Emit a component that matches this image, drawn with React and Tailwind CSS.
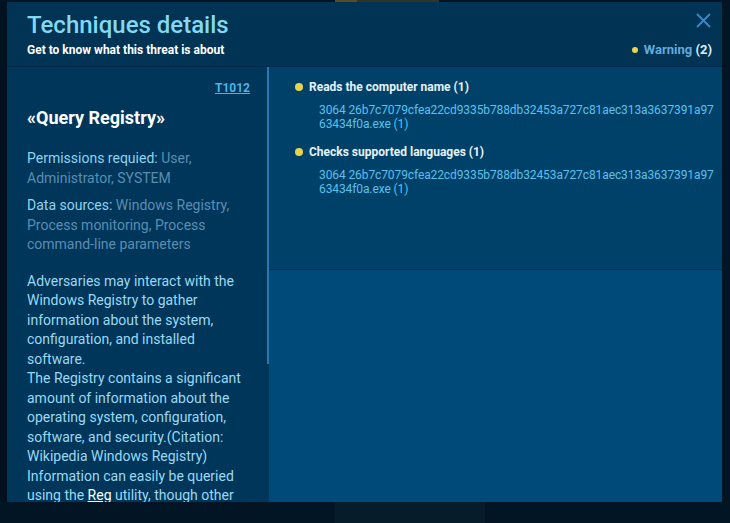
const hash = '3064 26b7c7079cfea22cd9335b788db32453a727c81aec313a3637391a97'

const behaviors = [
  { title: 'Reads the computer name (1)', file: '63434f0a.exe (1)' },
  { title: 'Checks supported languages (1)', file: '63434f0a.exe (1)' },
]

function CloseIcon() {
  return (
    <svg width="15" height="15" viewBox="0 0 15 15" fill="none">
      <path d="M1 1L14 14M14 1L1 14" stroke="#3a8cc6" strokeWidth="1.8" />
    </svg>
  )
}

export default function App() {
  return (
    <div className="flex h-[523px] w-[730px] flex-col overflow-hidden bg-[#011525] font-['Roboto',sans-serif]">
      <div className="flex h-[2px] shrink-0">
        <div className="w-[335px]" />
        <div className="w-[22px] bg-[#5a4a2a]" />
        <div className="w-[82px] bg-[#2f3628]" />
      </div>

      <div className="flex h-[500px] shrink-0">
        <div className="w-[7px] bg-[#02111f]" />
        <div className="flex w-[715px] flex-col bg-[#003354]">
          <header className="flex h-[65px] shrink-0 justify-between border-b border-[#002a47] pl-5 pr-[10px]">
            <div className="pt-[9px]">
              <h2 className="text-[24px] font-medium leading-[28px] text-[#83d9f2]">Techniques details</h2>
              <p className="mt-[3px] text-[12px] font-bold leading-[16px] text-white">
                Get to know what this threat is about
              </p>
            </div>
            <div className="flex flex-col items-end">
              <button type="button" className="mr-px mt-[11px]">
                <CloseIcon />
              </button>
              <div className="mt-[14px] flex items-center gap-[6px] text-[13px] font-bold leading-[16px]">
                <span className="h-[6px] w-[6px] rounded-full bg-[#e8d44a]" />
                <span className="text-[#63abdc]">
                  Warning <span className="text-[#dcedf8]">(2)</span>
                </span>
              </div>
            </div>
          </header>

          <div className="flex min-h-0 flex-1">
            <aside className="flex w-[262px] shrink-0 overflow-hidden bg-[#00365a]">
              <div className="w-[260px] pl-5 pt-[8px]">
                <div className="pr-[17px] text-right">
                  <a href="#" className="text-[12px] font-bold leading-[16px] text-[#4cb3ea] underline">
                    T1012
                  </a>
                </div>
                <div className="pr-[19px]">
                  <h3 className="mt-[7px] text-[18px] font-bold leading-[24px] text-white">«Query Registry»</h3>
                  <p className="mt-[19px] text-[14px] leading-[19.5px] text-[#5a8db2]">
                    <span className="text-[#8fd3f0]">Permissions requied:</span> User, Administrator, SYSTEM
                  </p>
                  <p className="mt-2 text-[14px] leading-[19.5px] text-[#5a8db2]">
                    <span className="text-[#8fd3f0]">Data sources:</span> Windows Registry, Process monitoring,
                    Process command-line parameters
                  </p>
                  <p className="mt-[17px] text-[14px] leading-[19.5px] text-[#9cd8f2]">
                    Adversaries may interact with the Windows Registry to gather information about the system,
                    configuration, and installed software.
                    <br />
                    The Registry contains a significant amount of information about the operating system,
                    configuration, software, and security.(Citation: Wikipedia Windows Registry) Information can
                    easily be queried using the <span className="text-white underline">Reg</span> utility, though
                    other Windows utilities may also be used to gather information.
                  </p>
                </div>
              </div>
              <div className="w-[2px] shrink-0">
                <div className="h-[297px] bg-[#2a78b2]" />
              </div>
            </aside>

            <section className="flex flex-1 flex-col bg-[#004a7a]">
              <div className="h-[203px] shrink-0 border-b border-[#00304f] bg-[#00416a] pl-[26px] pt-[12px]">
                {behaviors.map((b, i) => (
                  <div key={b.title} className={i ? 'mt-[13px]' : ''}>
                    <div className="flex items-center gap-[6px]">
                      <span className="h-[8px] w-[8px] rounded-full bg-[#e8d44a]" />
                      <span className="text-[12px] font-bold leading-[16px] text-[#e6f2f8]">{b.title}</span>
                    </div>
                    <p className="mt-[8px] whitespace-nowrap pl-6 text-[12px] leading-[14px] tracking-[-0.1px] text-[#5cc0ea]">
                      {hash}
                      <br />
                      {b.file}
                    </p>
                  </div>
                ))}
              </div>
              <div className="flex-1" />
            </section>
          </div>
        </div>
      </div>

      <div className="flex flex-1">
        <div className="w-[335px]" />
        <div className="w-[150px] bg-[#061c2b]" />
      </div>
    </div>
  )
}
